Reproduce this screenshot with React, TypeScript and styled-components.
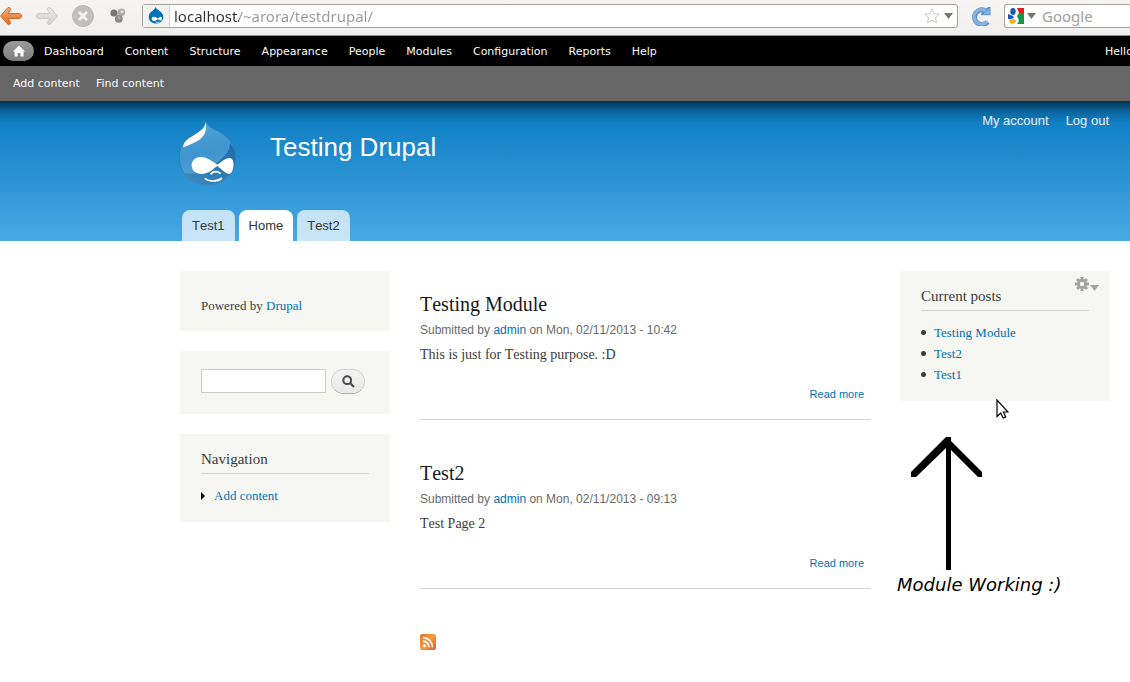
import React from "react";
import styled, { createGlobalStyle } from "styled-components";

const sans = `"Liberation Sans", Arial, sans-serif`;
const serif = `"Liberation Serif", Georgia, serif`;
const ui = `"DejaVu Sans", Verdana, sans-serif`;
const chrome = `"Noto Sans", Ubuntu, sans-serif`;

const GlobalStyle = createGlobalStyle`
  *, *::before, *::after { box-sizing: border-box; }
  html, body { margin: 0; background: #fff; }
  body { color: #3b3b3b; font-family: ${serif}; font-size: 14px; overflow-x: hidden; }
  h1, h2, p, ul, figure { margin: 0; padding: 0; font-weight: normal; }
  ul { list-style: none; }
  svg { display: block; flex: none; }
  button { margin: 0; padding: 0; border: 0; background: none; }
`;

const Link = styled.a`
  color: #0071b3;
  text-decoration: none;
`;

/* Browser bar */
const BrowserBar = styled.div`
  display: flex;
  align-items: center;
  height: 36px;
  padding-bottom: 4px;
  background: linear-gradient(#f6f5f4, #f0efed);
  border-bottom: 1px solid #8f8c88;
  overflow: hidden;
`;
const NavButtons = styled.div`
  display: flex;
  align-items: center;
  gap: 14px;
  margin-right: 16px;
`;
const UrlBox = styled.div`
  display: flex;
  flex: 1;
  align-items: center;
  gap: 4px;
  height: 24px;
  min-width: 0;
  padding-right: 4px;
  background: #fff;
  border: 1px solid #a5a19c;
  border-radius: 3px;
`;
const SiteBadge = styled.span`
  display: flex;
  align-items: center;
  justify-content: center;
  width: 27px;
  height: 22px;
  background: #f4f3f2;
  border-right: 1px solid #d6d4d1;
`;
const UrlInput = styled.input`
  flex: 1;
  min-width: 0;
  height: 22px;
  padding: 0;
  border: 0;
  outline: 0;
  font-family: ${chrome};
  font-size: 15px;
  color: transparent;
  background: linear-gradient(90deg, #333 65px, #999 65px);
  background-clip: text;
`;
const IconButton = styled.button`
  display: flex;
  align-items: center;
`;
const ReloadButton = styled(IconButton)`
  margin: 0 13px;
`;
const SearchBox = styled.div`
  display: flex;
  align-items: center;
  gap: 3px;
  width: 126px;
  height: 24px;
  padding-left: 3px;
  background: #fff;
  border: 1px solid #a5a19c;
  border-right: 0;
  border-radius: 3px 0 0 3px;
`;
const SearchInput = styled.input`
  flex: 1;
  min-width: 0;
  height: 22px;
  padding: 0 3px;
  border: 0;
  outline: 0;
  background: transparent;
  font-family: ${chrome};
  font-size: 15px;
  &::placeholder { color: #a09e9b; opacity: 1; }
`;

/* Admin toolbar */
const Toolbar = styled.nav`
  display: flex;
  align-items: center;
  gap: 21px;
  height: 30px;
  padding-left: 3px;
  background: #000;
  font-family: ${ui};
  font-size: 11px;
  overflow: hidden;
`;
const ToolbarLink = styled.a`
  color: #fafafa;
  text-decoration: none;
  white-space: nowrap;
`;
const HomeLink = styled.a`
  display: flex;
  align-items: center;
  justify-content: center;
  width: 31px;
  height: 20px;
  margin-right: -11px;
  border-radius: 10px;
  background: linear-gradient(#9a9a9a, #7d7d7d);
`;
const Greeting = styled.span`
  width: 25px;
  margin-left: auto;
  color: #fafafa;
  white-space: nowrap;
  overflow: hidden;
`;
const Shortcuts = styled.nav`
  display: flex;
  align-items: center;
  gap: 16px;
  height: 35px;
  padding-left: 13px;
  background: #666;
  font-family: ${ui};
  font-size: 11px;
`;

/* Site header */
const Header = styled.header`
  display: flex;
  flex-direction: column;
  justify-content: space-between;
  height: 140px;
  padding: 10px 21px 0 178px;
  background:
    linear-gradient(rgba(0, 0, 0, 0.6), rgba(0, 0, 0, 0.2) 10px, rgba(0, 0, 0, 0) 22px),
    linear-gradient(#0779bf, #48a9e4);
  font-family: ${sans};
`;
const HeaderTop = styled.div`
  display: flex;
  align-items: flex-start;
`;
const LogoLink = styled.a`
  margin: 9px 33px 0 0;
`;
const SiteName = styled.h1`
  margin-top: 20px;
  color: #fffeff;
  font-size: 26px;
  line-height: 32px;
`;
const UserMenu = styled.nav`
  display: flex;
  gap: 17px;
  margin-left: auto;
  font-size: 13px;
  line-height: 20px;
`;
const UserLink = styled.a`
  color: #e6f2fa;
  text-decoration: none;
`;
const Tabs = styled.nav`
  display: flex;
  gap: 4px;
  padding-left: 4px;
  font-kerning: none;
`;
const Tab = styled.a<{ $active?: boolean }>`
  height: 31px;
  padding: 0 10px;
  border-radius: 8px 8px 0 0;
  background: ${(p) => (p.$active ? "#fff" : "rgba(255, 255, 255, 0.7)")};
  color: #333;
  font-size: 13px;
  line-height: 31px;
  text-decoration: none;
`;

/* Page columns */
const Columns = styled.div`
  display: grid;
  grid-template-columns: 210px minmax(0, 1fr) 210px;
  column-gap: 30px;
  padding: 10px 20px 32px 180px;
`;
const Sidebar = styled.aside`
  display: flex;
  flex-direction: column;
  gap: 20px;
  padding-top: 20px;
`;
const Block = styled.section`
  position: relative;
  padding: 15px 21px 16px;
  background: #f6f6f2;
  font-size: 13px;
  line-height: 21px;
`;
const PoweredBlock = styled(Block)`
  padding-top: 24px;
  padding-bottom: 15px;
`;
const SearchBlock = styled(Block)`
  padding-top: 18px;
  padding-bottom: 20px;
`;
const BlockTitle = styled.h2`
  margin-bottom: 11px;
  padding-bottom: 4px;
  border-bottom: 1px solid #d6d6d6;
  font-size: 15px;
  line-height: 20px;
  font-kerning: none;
`;
const SearchForm = styled.form`
  display: flex;
  gap: 5px;
`;
const SearchField = styled.input`
  width: 125px;
  height: 24px;
  padding: 2px 4px;
  border: 1px solid #ccc;
  background: #fff;
`;
const SearchSubmit = styled.button`
  display: flex;
  align-items: center;
  justify-content: center;
  width: 34px;
  height: 25px;
  border: 1px solid #d2d2d2;
  border-bottom-color: #b0b0b0;
  border-radius: 13px;
  background: linear-gradient(#f3f3f3, #e8e8e8);
`;
const MenuItem = styled.li`
  display: flex;
  align-items: center;
  gap: 9px;
`;
const Bullet = styled.span`
  width: 5px;
  height: 5px;
  margin-right: -1px;
  border-radius: 50%;
  background: #3b3b3b;
`;
const GearButton = styled.button`
  position: absolute;
  top: 6px;
  right: 11px;
  display: flex;
  align-items: flex-end;
  gap: 1px;
`;
const Pointer = styled.span`
  position: absolute;
  bottom: -18px;
  left: 96px;
`;
const Note = styled.figure`
  margin: 16px 0 0 -3px;
  font-family: ${ui};
  font-size: 18px;
  font-style: italic;
  line-height: 24px;
  color: #000;
  white-space: nowrap;
  svg { margin: 0 0 3px 14px; }
`;

/* Posts */
const Post = styled.article`
  padding: 41px 0 17px;
  border-bottom: 1px solid #d3d7d9;
  font-kerning: none;
`;
const PostTitle = styled.h2`
  margin-bottom: 6px;
  font-size: 20px;
  line-height: 24px;
`;
const TitleLink = styled.a`
  color: #181818;
  text-decoration: none;
`;
const Meta = styled.p`
  margin-bottom: 7px;
  color: #68696b;
  font-family: ${sans};
  font-size: 12px;
  line-height: 16px;
`;
const PostBody = styled.p`
  margin-bottom: 21px;
  font-size: 14px;
  line-height: 20px;
`;
const PostLinks = styled.div`
  padding-right: 6px;
  font-family: ${sans};
  font-size: 11px;
  line-height: 16px;
  text-align: right;
`;
const FeedLink = styled.a`
  display: inline-block;
  margin-top: 45px;
`;

const Caret = ({ color = "#77756f" }: { color?: string }) => (
  <svg width="9" height="6" viewBox="0 0 9 6"><path d="M0 0h9L4.500 6z" fill={color} /></svg>
);

const ArrowIcon = ({ active }: { active?: boolean }) => (
  <svg width="22" height="20" viewBox="0 0 22 20">
    <defs>
      <linearGradient id={active ? "arrowOn" : "arrowOff"} x2="0" y2="1">
        <stop stopColor={active ? "#f9b078" : "#ebe9e7"} />
        <stop offset="1" stopColor={active ? "#e0671c" : "#d5d2cf"} />
      </linearGradient>
    </defs>
    <path
      transform={active ? undefined : "translate(22 0) scale(-1 1)"}
      d="M.5 10 7.500 2Q9 .8 10.200 2.200Q11 3.400 10 4.800L8 7.500H19.500Q21.500 7.700 21.500 10T19.500 12.500H8L10 15.200Q11 16.600 10.200 17.800Q9 19.200 7.500 18Z"
      fill={`url(#${active ? "arrowOn" : "arrowOff"})`}
      stroke={active ? "#cf6a2c" : "#cbc8c5"}
      strokeWidth="1"
    />
  </svg>
);

const StopIcon = () => (
  <svg width="22" height="22" viewBox="0 0 22 22">
    <circle cx="11" cy="11" r="10.500" fill="#c3c0bf" stroke="#b8b5b4" />
    <path d="M7 7l8 8M15 7l-8 8" stroke="#f4f3f2" strokeWidth="2.800" />
  </svg>
);

const ClusterIcon = () => (
  <svg width="18" height="16" viewBox="-2 0 18 16">
    <circle cx="4" cy="5" r="3.600" fill="#777" />
    <circle cx="11.500" cy="4.200" r="3.700" fill="#aaa" />
    <circle cx="12" cy="3.600" r="1.600" fill="#ddd" />
    <circle cx="8.800" cy="10.800" r="3.900" fill="#8a8a8a" />
    <circle cx="9" cy="9.600" r="1.600" fill="#aaa" />
  </svg>
);

const SmallDrop = () => (
  <svg width="16" height="17" viewBox="0 0 16 17">
    <path d="M7.500 0Q8 2 11 3.400Q15.300 6 15.300 10C15.300 14 12 16.500 8 16.500S.7 14 .7 10Q.7 6 4.500 3.800Q7 2.400 7.500 0Z" fill="#0272b8" />
    <path d="M3.700 12C3.700 10.400 5 9.600 6.300 9.700C8 9.800 9 11 9.800 11.500C10.800 11 12 9.500 13.200 9.900C14.600 10.500 14 13.500 12.800 13.500C11.700 13.500 10.800 12.500 9.900 12.300C8.800 12.600 8 13.900 6.200 13.900C4.700 13.900 3.700 13.200 3.700 12Z" fill="#fff" />
    <path d="M7.500 15Q9.500 16 11.300 14.800" stroke="#fff" fill="none" strokeWidth=".8" />
  </svg>
);

const StarIcon = () => (
  <svg width="16" height="16" viewBox="0 0 16 16">
    <path d="M8 .9 10.200 5.600 15.300 6.200 11.500 9.600 12.500 14.800 8 12.200 3.500 14.800 4.500 9.600 .7 6.200 5.800 5.600Z" fill="#fdfdfd" stroke="#c9c7c4" strokeLinejoin="round" />
  </svg>
);

const ReloadIcon = () => (
  <svg width="20" height="20" viewBox="0 0 20 20">
    <path d="M16.500 15.800A7.300 7.300 0 1 1 14.800 5" fill="none" stroke="#5b8ec6" strokeWidth="5" />
    <path d="M19.500 .7V9.300H10.300V6.600L13.500 6 16 1.500Z" fill="#5b8ec6" />
    <path d="M16.200 15.200A7.300 7.300 0 1 1 14.800 5" fill="none" stroke="#86b2e0" strokeWidth="3.400" />
    <path d="M18.700 1.800V8.500H11.500L15.500 5Z" fill="#86b2e0" />
  </svg>
);

const GoogleIcon = () => (
  <svg width="16" height="16" viewBox="0 0 16 16">
    <path d="M0 0h16v16H0z" fill="#fff" />
    <path d="M9 0h7v5H11Q10 2 9 0Z" fill="#e8191c" />
    <path d="M11 5h5v11H9Q12 13 10 10Q8 8 11 5Z" fill="#13973c" />
    <ellipse cx="5" cy="3.500" rx="2.700" ry="3.400" fill="#1c56b8" />
    <path d="M0 6 5 8 6 10 3 11H0Z" fill="#1c56b8" />
    <ellipse cx="4.500" cy="13.300" rx="3.300" ry="2.400" fill="#f5b51c" />
  </svg>
);

const HomeIcon = () => (
  <svg width="12" height="12" viewBox="0 0 12 12">
    <path d="M6 .5 12 6.600H10.500V11.500H7.400V8H4.700V11.500H1.600V6.600H0Z" fill="#fff" />
  </svg>
);

const DrupalLogo = () => (
  <svg width="59" height="66" viewBox="24 30 177 198">
    <defs>
      <linearGradient id="drop" x1=".3" y1="0" x2=".5" y2="1">
        <stop stopColor="#4fa3d8" />
        <stop offset=".5" stopColor="#3f95cf" />
        <stop offset="1" stopColor="#5aa5d6" />
      </linearGradient>
      <linearGradient id="shade" x1="0" y1="1" x2="1" y2="0">
        <stop stopColor="#3f8cc0" />
        <stop offset="1" stopColor="#1d6aa8" />
      </linearGradient>
    </defs>
    <path d="M107 33C111 48 128 55 145 64C176 81 198 106 198 142C198 190 160 225 112 225C64 225 28 188 28 142C28 108 46 88 66 77C90 64 104 54 107 33Z" fill="url(#drop)" stroke="#3577a8" strokeWidth="2" />
    <path d="M180 98C190 110 197 124 197 142C197 188 160 224 112 224C76 224 48 210 37 188C66 196 108 186 140 158C162 140 181 124 180 98Z" fill="url(#shade)" />
    <path d="M107 36C105 58 88 65 68 78C48 90 40 98 40 112C54 104 88 98 102 74C108 64 110 50 107 36Z" fill="#fff" />
    <path d="M65 166C65 151 77 141 92 141C112 141 128 155 142 164C152 158 167 143 180 144C190 146 192 160 190 171C188 184 184 193 174 191C164 189 152 175 142 168C130 176 114 193 94 192C77 191 65 182 65 166Z" fill="#fff" />
    <path d="M122 193C128 183 146 182 151 192" fill="none" stroke="#fff" strokeWidth="5" />
    <path d="M104 205C118 216 142 216 156 204" fill="none" stroke="#fff" strokeWidth="5" />
  </svg>
);

const MagnifierIcon = () => (
  <svg width="13" height="13" viewBox="0 0 13 13">
    <circle cx="5.200" cy="5.200" r="3.900" fill="none" stroke="#4a4a4a" strokeWidth="2" />
    <path d="M8 8l4 4" stroke="#4a4a4a" strokeWidth="2.200" />
  </svg>
);

const GearIcon = () => (
  <svg width="14" height="14" viewBox="-7 -7 14 14">
    {[0, 45, 90, 135].map((a) => (
      <rect key={a} x="-1.500" y="-7" width="3" height="14" fill="#a3a49f" transform={`rotate(${a})`} />
    ))}
    <circle r="5" fill="#a3a49f" />
    <circle r="2.200" fill="#f6f6f2" />
  </svg>
);

const PointerIcon = () => (
  <svg width="13" height="20" viewBox="0 0 13 20">
    <path d="M1 1V17.500L4.700 14 7.200 19 9.700 17.900 7.300 13H12Z" fill="#fff" stroke="#000" strokeWidth="1.200" />
  </svg>
);

const BigArrow = () => (
  <svg width="72" height="133" viewBox="0 0 72 133">
    <path d="M35 0H40V4L71 35V40H67L40 13V133H35V11L5 40H0V35Z" fill="#000" />
  </svg>
);

const FeedIcon = () => (
  <svg width="16" height="16" viewBox="0 0 16 16">
    <defs>
      <linearGradient id="feed" x1="0" y1="0" x2="1" y2="1">
        <stop stopColor="#e0702b" />
        <stop offset=".5" stopColor="#f89a40" />
        <stop offset="1" stopColor="#d95f22" />
      </linearGradient>
    </defs>
    <rect width="16" height="16" rx="2" fill="url(#feed)" />
    <circle cx="4.500" cy="11.700" r="1.500" fill="#fff" />
    <path d="M3 7.200A6 6 0 0 1 9 13.200M3 3.700A9.500 9.500 0 0 1 12.500 13.200" fill="none" stroke="#fff" strokeWidth="1.700" />
  </svg>
);

const adminLinks = ["Dashboard", "Content", "Structure", "Appearance", "People", "Modules", "Configuration", "Reports", "Help"];
const posts = [
  { title: "Testing Module", date: "Mon, 02/11/2013 - 10:42", body: "This is just for Testing purpose. :D" },
  { title: "Test2", date: "Mon, 02/11/2013 - 09:13", body: "Test Page 2" },
];

export default function App() {
  return (
    <>
      <GlobalStyle />
      <BrowserBar>
        <NavButtons>
          <IconButton aria-label="Back"><ArrowIcon active /></IconButton>
          <IconButton aria-label="Forward"><ArrowIcon /></IconButton>
          <IconButton aria-label="Stop"><StopIcon /></IconButton>
          <IconButton aria-label="Extension"><ClusterIcon /></IconButton>
        </NavButtons>
        <UrlBox>
          <SiteBadge><SmallDrop /></SiteBadge>
          <UrlInput aria-label="Address" defaultValue="localhost/~arora/testdrupal/" />
          <IconButton aria-label="Bookmark"><StarIcon /></IconButton>
          <IconButton aria-label="History"><Caret /></IconButton>
        </UrlBox>
        <ReloadButton aria-label="Reload"><ReloadIcon /></ReloadButton>
        <SearchBox>
          <GoogleIcon />
          <Caret />
          <SearchInput aria-label="Web search" placeholder="Google" />
        </SearchBox>
      </BrowserBar>

      <Toolbar aria-label="Administration">
        <HomeLink href="#" aria-label="Home"><HomeIcon /></HomeLink>
        {adminLinks.map((label) => (
          <ToolbarLink href="#" key={label}>{label}</ToolbarLink>
        ))}
        <Greeting>Hello</Greeting>
      </Toolbar>
      <Shortcuts aria-label="Shortcuts">
        <ToolbarLink href="#">Add content</ToolbarLink>
        <ToolbarLink href="#">Find content</ToolbarLink>
      </Shortcuts>

      <Header>
        <HeaderTop>
          <LogoLink href="#" aria-label="Front page"><DrupalLogo /></LogoLink>
          <SiteName>Testing Drupal</SiteName>
          <UserMenu aria-label="Account">
            <UserLink href="#">My account</UserLink>
            <UserLink href="#">Log out</UserLink>
          </UserMenu>
        </HeaderTop>
        <Tabs aria-label="Main menu">
          <Tab href="#">Test1</Tab>
          <Tab href="#" $active>Home</Tab>
          <Tab href="#">Test2</Tab>
        </Tabs>
      </Header>

      <Columns>
        <Sidebar>
          <PoweredBlock>
            <p>Powered by <Link href="#">Drupal</Link></p>
          </PoweredBlock>
          <SearchBlock>
            <SearchForm>
              <SearchField type="text" aria-label="Search" />
              <SearchSubmit type="button" aria-label="Search"><MagnifierIcon /></SearchSubmit>
            </SearchForm>
          </SearchBlock>
          <Block>
            <BlockTitle>Navigation</BlockTitle>
            <ul>
              <MenuItem>
                <svg width="4" height="8" viewBox="0 0 4 8"><path d="M0 0 4 4 0 8Z" fill="#000" /></svg>
                <Link href="#">Add content</Link>
              </MenuItem>
            </ul>
          </Block>
        </Sidebar>

        <main>
          {posts.map((post) => (
            <Post key={post.title}>
              <PostTitle><TitleLink href="#">{post.title}</TitleLink></PostTitle>
              <Meta>Submitted by <Link href="#">admin</Link> on {post.date}</Meta>
              <PostBody>{post.body}</PostBody>
              <PostLinks><Link href="#">Read more</Link></PostLinks>
            </Post>
          ))}
          <FeedLink href="#" aria-label="Subscribe"><FeedIcon /></FeedLink>
        </main>

        <Sidebar>
          <Block>
            <GearButton aria-label="Configure block"><GearIcon /><Caret color="#a3a49f" /></GearButton>
            <BlockTitle>Current posts</BlockTitle>
            <ul>
              {["Testing Module", "Test2", "Test1"].map((title) => (
                <MenuItem key={title}><Bullet /><Link href="#">{title}</Link></MenuItem>
              ))}
            </ul>
            <Pointer><PointerIcon /></Pointer>
          </Block>
          <Note>
            <BigArrow />
            <figcaption>Module Working :)</figcaption>
          </Note>
        </Sidebar>
      </Columns>
    </>
  );
}
